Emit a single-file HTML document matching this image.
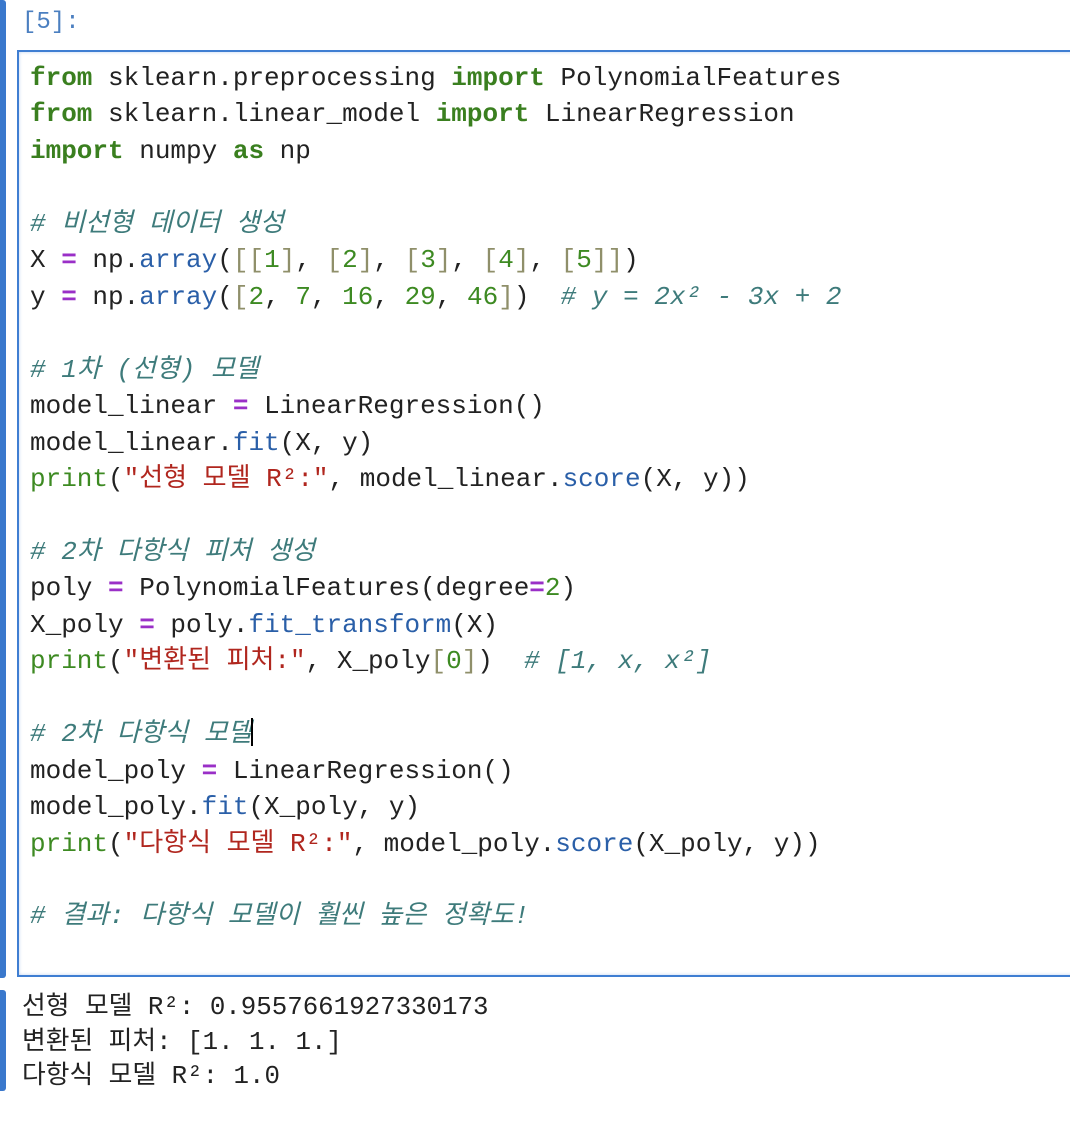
<!DOCTYPE html>
<html><head><meta charset="utf-8"><style>
body{margin:0;width:1070px;height:1132px;background:#fff;position:relative;overflow:hidden;font-family:"Liberation Mono","Noto Sans CJK KR",monospace;}
.bar{position:absolute;left:0;width:6px;background:#3a78cc;border-radius:0 3px 3px 0;}
.prompt{position:absolute;left:22px;top:9px;font-size:24px;color:#4b7fc0;}
.box{position:absolute;left:17px;top:50px;width:1060px;height:927px;border:2px solid #3f7ed2;box-sizing:border-box;box-shadow:inset 0 0 3px rgba(60,120,210,.35);}
pre{margin:0;position:absolute;left:30px;top:60px;font-family:"Liberation Mono","Noto Sans CJK KR",monospace;font-size:26px;line-height:36.45px;color:#222;}
.k{color:#3a7f1f;font-weight:bold}
.o{color:#9a2fc7;font-weight:bold}
.f{color:#2a5fa8}
.n{color:#3d8a22}
.b{color:#8f8f6a}
.c{color:#3e7b7b;font-style:italic}
.s{color:#b0261e}
.out{position:absolute;left:22px;top:991px;font-size:25.8px;line-height:34.6px;color:#222;margin:0;font-family:"Liberation Mono","Noto Sans CJK KR",monospace;}
.cur{display:inline-block;width:2px;height:28px;background:#000;vertical-align:-5px;margin-left:-1px}
</style></head><body>
<div class="bar" style="top:0;height:978px"></div>
<div class="bar" style="top:990px;height:101px"></div>
<div class="prompt">[5]:</div>
<div class="box"></div>
<pre><span class="k">from</span> sklearn.preprocessing <span class="k">import</span> PolynomialFeatures
<span class="k">from</span> sklearn.linear_model <span class="k">import</span> LinearRegression
<span class="k">import</span> numpy <span class="k">as</span> np

<span class="c"># 비선형 데이터 생성</span>
X <span class="o">=</span> np.<span class="f">array</span>(<span class="b">[[</span><span class="n">1</span><span class="b">]</span>, <span class="b">[</span><span class="n">2</span><span class="b">]</span>, <span class="b">[</span><span class="n">3</span><span class="b">]</span>, <span class="b">[</span><span class="n">4</span><span class="b">]</span>, <span class="b">[</span><span class="n">5</span><span class="b">]]</span>)
y <span class="o">=</span> np.<span class="f">array</span>(<span class="b">[</span><span class="n">2</span>, <span class="n">7</span>, <span class="n">16</span>, <span class="n">29</span>, <span class="n">46</span><span class="b">]</span>)  <span class="c"># y = 2x² - 3x + 2</span>

<span class="c"># 1차 (선형) 모델</span>
model_linear <span class="o">=</span> LinearRegression()
model_linear.<span class="f">fit</span>(X, y)
<span class="n">print</span>(<span class="s">"선형 모델 R²:"</span>, model_linear.<span class="f">score</span>(X, y))

<span class="c"># 2차 다항식 피처 생성</span>
poly <span class="o">=</span> PolynomialFeatures(degree<span class="o">=</span><span class="n">2</span>)
X_poly <span class="o">=</span> poly.<span class="f">fit_transform</span>(X)
<span class="n">print</span>(<span class="s">"변환된 피처:"</span>, X_poly<span class="b">[</span><span class="n">0</span><span class="b">]</span>)  <span class="c"># [1, x, x²]</span>

<span class="c"># 2차 다항식 모델</span><span class="cur"></span>
model_poly <span class="o">=</span> LinearRegression()
model_poly.<span class="f">fit</span>(X_poly, y)
<span class="n">print</span>(<span class="s">"다항식 모델 R²:"</span>, model_poly.<span class="f">score</span>(X_poly, y))

<span class="c"># 결과: 다항식 모델이 훨씬 높은 정확도!</span></pre>
<pre class="out">선형 모델 R²: 0.9557661927330173
변환된 피처: [1. 1. 1.]
다항식 모델 R²: 1.0</pre>
</body></html>
